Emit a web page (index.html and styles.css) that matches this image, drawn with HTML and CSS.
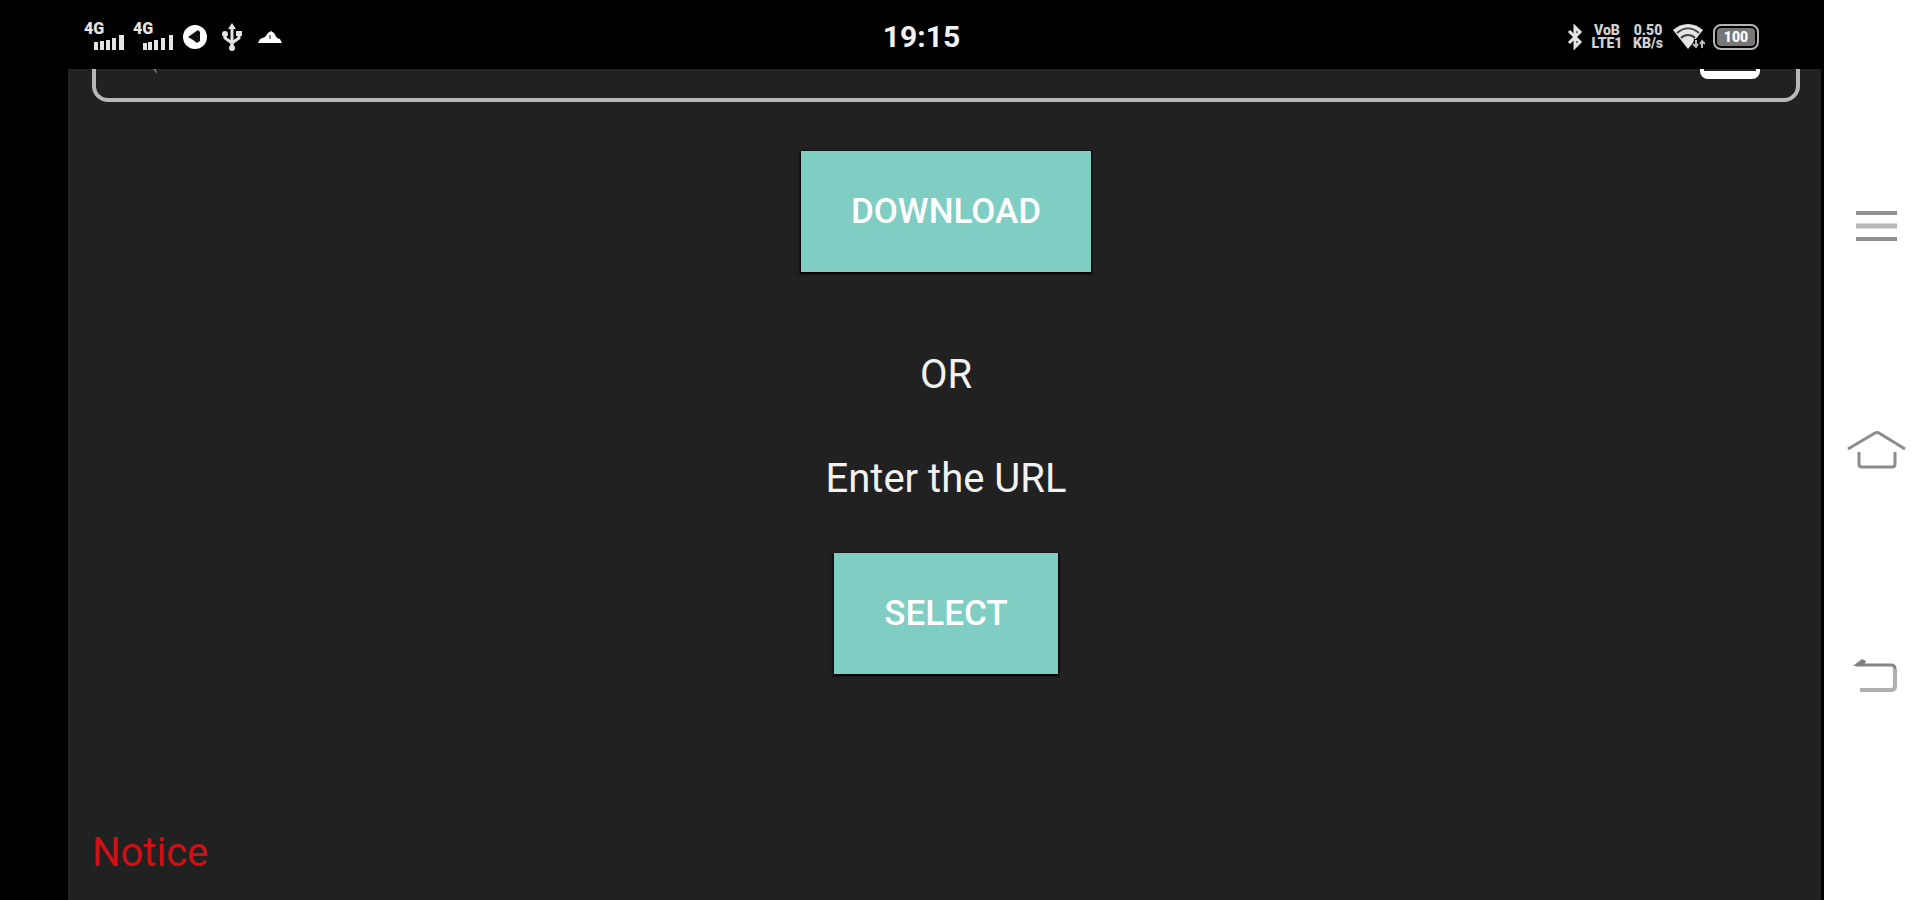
FILE: index.html
```html
<!DOCTYPE html>
<html lang="en">
<head>
    <meta charset="UTF-8">
    <meta name="viewport" content="width=device-width, initial-scale=1.0">
    <title>Download</title>
    <link rel="stylesheet" href="styles.css">
</head>
<body>
    <div class="device">
        <header class="status-bar">
            <div class="status-left">
                <div class="signal">
                    <span>4G</span>
                    <svg width="32" height="16" viewBox="0 0 32 16" fill="#e4e4e4">
                        <path d="M1 7h4v8H1zM7 6h4v9H7zM13 5h4v10h-4zM19 3h4v12h-4zM26 0h5v15h-5z"/>
                    </svg>
                </div>
                <div class="signal">
                    <span>4G</span>
                    <svg width="32" height="16" viewBox="0 0 32 16" fill="#e4e4e4">
                        <path d="M1 8h4v7H1zM6 7h4v8H6zM12 5h4v10h-4zM19 3h4v12h-4zM27 0h4v15h-4z"/>
                    </svg>
                </div>
                <svg width="26" height="26" viewBox="0 0 26 26">
                    <circle cx="13" cy="13" r="12" fill="#fff"/>
                    <path d="M6 13l10-7 2 2v9l-3 2-4-3z" fill="#111"/>
                </svg>
                <svg class="icon-usb" width="20" height="28" viewBox="0 0 20 28" fill="none" stroke="#e4e4e4" stroke-width="3">
                    <path d="M10 3v22M3 10v5l7 5M17 10v5l-7 5"/>
                    <path d="M10 0l4 6H6z" fill="#e4e4e4" stroke="none"/>
                    <circle cx="3" cy="11" r="3" fill="#e4e4e4" stroke="none"/>
                    <path d="M14 8h6v5h-6z" fill="#e4e4e4" stroke="none"/>
                    <circle cx="10" cy="25" r="3" fill="#e4e4e4" stroke="none"/>
                </svg>
                <svg width="24" height="14" viewBox="0 0 24 14">
                    <path d="M0 13l2-4 5-2 3-4 3-2 3 2 3 5 3 1 2 4z" fill="#fff"/>
                    <path d="M12 5v4" stroke="#888" stroke-width="2"/>
                </svg>
            </div>
            <time class="clock">19:15</time>
            <div class="status-right">
                <svg width="16" height="26" viewBox="0 0 16 26" fill="none" stroke="#e4e4e4" stroke-width="3">
                    <path d="M2 7l11 11-5 5V3l5 5L2 19"/>
                </svg>
                <div class="stacked volte"><span>VoB</span><span>LTE1</span></div>
                <div class="stacked speed"><span>0.50</span><span>KB/s</span></div>
                <svg width="32" height="26" viewBox="0 0 32 26">
                    <path d="M0 6C9-2 21-2 30 6L15 25z" fill="#e4e4e4"/>
                    <path d="M4 9c7-6 15-6 22 0M8 14c4-4 10-4 14 0" fill="none" stroke="#444" stroke-width="2"/>
                    <path d="M21 15h11v11H19z" fill="#000"/>
                    <path d="M23 16v6M20 20l3 3 2-3M29 24v-6M27 20l2-3 3 3" fill="none" stroke="#bbb" stroke-width="2"/>
                </svg>
                <div class="battery"><span>100</span></div>
            </div>
        </header>

        <main class="screen">
            <div class="url-field">
                <svg width="6" height="6" viewBox="0 0 6 6"><path d="M1 0h3l1 5z" fill="#777"/></svg>
                <input type="text" aria-label="Link">
                <button class="paste" type="button" aria-label="Paste"></button>
            </div>
            <button class="action" type="button">DOWNLOAD</button>
            <p class="or">OR</p>
            <p class="enter">Enter the URL</p>
            <button class="action" type="button">SELECT</button>
            <p class="notice">Notice</p>
        </main>

        <nav class="nav-bar">
            <button type="button" aria-label="Menu">
                <svg width="60" height="40" viewBox="0 0 60 40" fill="none" stroke-width="4">
                    <path d="M10 7h41M10 33h41" stroke="#909090"/>
                    <path d="M10 20h41" stroke="#b8b8b8" stroke-width="5"/>
                </svg>
            </button>
            <button type="button" aria-label="Home">
                <svg width="60" height="40" viewBox="0 0 60 40" fill="none" stroke="#8c8c8c" stroke-width="3">
                    <path d="M2 19L29 3q2-1 4 0l26 16"/>
                    <path d="M13 22v12q0 3 3 3h30q3 0 3-3V22"/>
                </svg>
            </button>
            <button type="button" aria-label="Back">
                <svg width="60" height="40" viewBox="0 0 60 40" fill="none">
                    <path d="M14 36h31q4 0 4-4V15" stroke="#b0b0b0" stroke-width="4"/>
                    <path d="M10 11h35q4 0 4 4" stroke="#858585" stroke-width="3"/>
                    <path d="M7 12l9-7 4 2-2 5z" fill="#808080"/>
                </svg>
            </button>
        </nav>
    </div>
</body>
</html>
```
FILE: styles.css
```css
* {
    margin: 0;
    padding: 0;
    box-sizing: border-box;
}

body {
    font-family: Roboto, "Liberation Sans", sans-serif;
    background: #000;
    color: #f2f2f2;
}

button {
    border: none;
    background: none;
    font-family: inherit;
    cursor: pointer;
}

svg {
    display: block;
    flex: none;
}

.device {
    display: grid;
    grid-template-columns: 68px 1fr 104px;
    grid-template-rows: 69px 1fr;
    min-height: 100vh;
}

/* status bar */
.status-bar {
    grid-column: 1 / 3;
    display: grid;
    grid-template-columns: 1fr auto 1fr;
    align-items: center;
    padding: 4px 65px 0 84px;
}

.status-left,
.status-right {
    display: flex;
    align-items: center;
}

.status-right {
    justify-content: flex-end;
    gap: 8px;
}

.signal {
    width: 41px;
    margin-right: 8px;
    font-size: 16px;
    font-weight: 900;
    line-height: 12px;
    color: #e4e4e4;
}

.signal span {
    display: block;
}

.signal svg {
    margin-left: auto;
}

.icon-usb {
    margin: 0 16px 0 14px;
}

.clock {
    font-size: 30px;
    font-weight: 700;
    line-height: 32px;
}

.stacked {
    font-size: 14px;
    font-weight: 900;
    line-height: 13px;
    color: #d0d0d0;
    text-align: center;
}

.stacked span {
    display: block;
}

.volte {
    width: 32px;
}

.speed {
    width: 34px;
}

.battery {
    width: 46px;
    height: 26px;
    padding: 2px;
    border: 2px solid #b4b4b4;
    border-radius: 8px;
}

.battery span {
    display: block;
    border-radius: 4px;
    background: #777;
    color: #fff;
    font-size: 14px;
    font-weight: 900;
    line-height: 18px;
    text-align: center;
}

/* app */
.screen {
    grid-column: 2;
    display: flex;
    flex-direction: column;
    align-items: center;
    padding: 0 21px 23px 24px;
    background: #212121;
    border-right: 3px solid #000;
}

.url-field {
    display: flex;
    align-items: flex-start;
    align-self: stretch;
    height: 33px;
    padding: 0 36px 0 56px;
    border: 4px solid #b8b8b8;
    border-top: none;
    border-radius: 0 0 16px 16px;
}

.url-field input {
    flex: 1;
    min-width: 0;
    height: 24px;
    border: none;
    outline: none;
    background: none;
    color: inherit;
    font: inherit;
}

.paste {
    width: 60px;
    height: 10px;
    border: 4px solid #fff;
    border-top: none;
    border-bottom-width: 8px;
    border-radius: 0 0 8px 8px;
}

.action {
    height: 121px;
    padding: 0 50px;
    background: #80cdc4;
    box-shadow: 0 1px 2px 1px #000;
    color: #fff;
    font-size: 35px;
    font-weight: 500;
}

.url-field + .action {
    margin-top: 49px;
}

.or,
.enter,
.notice {
    font-size: 40px;
    line-height: 48px;
}

.or {
    margin-top: 79px;
}

.enter {
    margin: 56px 0 50px;
}

.notice {
    align-self: flex-start;
    margin-top: auto;
    color: #d01014;
}

/* navigation keys */
.nav-bar {
    grid-column: 3;
    grid-row: 1 / 3;
    display: flex;
    flex-direction: column;
    align-items: center;
    justify-content: space-around;
    padding: 114px 0;
    background: #fff;
}
```
